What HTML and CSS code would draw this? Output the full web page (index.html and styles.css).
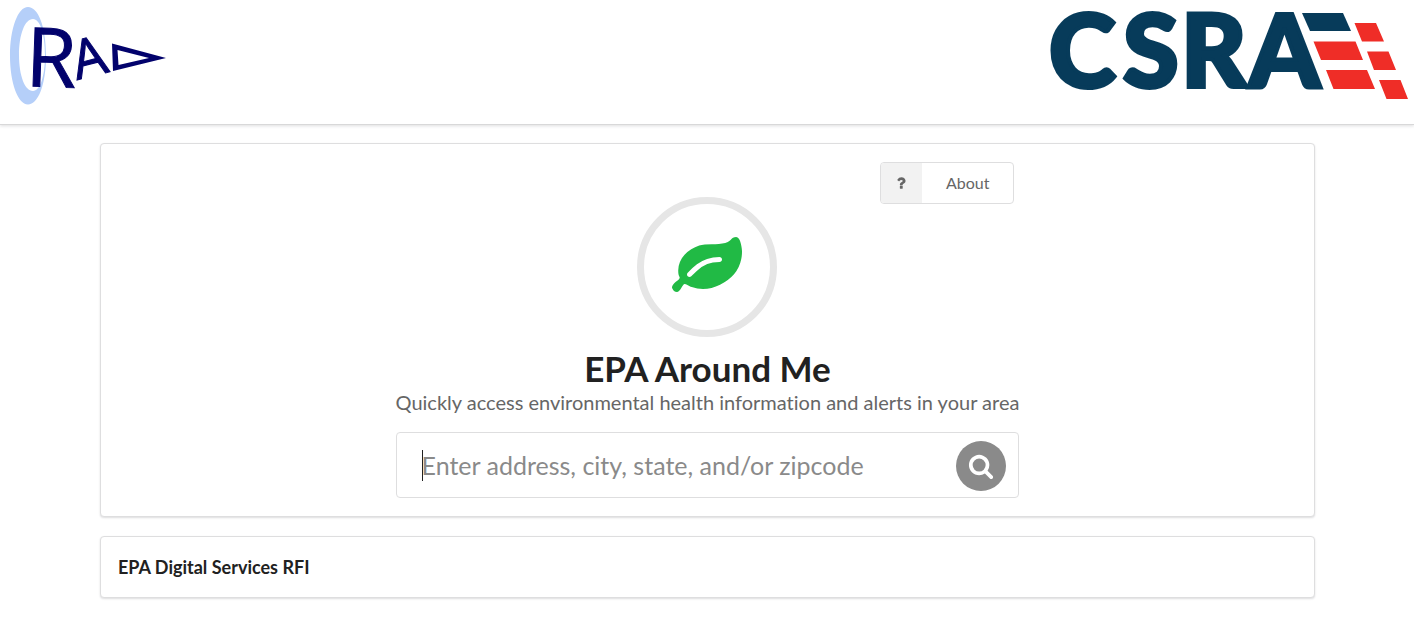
FILE: index.html
```html
<!DOCTYPE html>
<html lang="en">
<head>
<meta charset="utf-8">
<meta name="viewport" content="width=device-width, initial-scale=1">
<title>EPA Around Me</title>
<link rel="stylesheet" href="styles.css">
</head>
<body>
<header class="site-header">
  <svg class="logo-rad" viewBox="0 0 170 110" role="img" aria-label="RAD">
    <path class="rad-ring" fill-rule="evenodd" d="M28 7C38 7 46 26 46 56C46 85 38 104.500 28 104.500C18 104.500 10 83 10 56C10 28 18 7 28 7ZM33 19C25 19 19 34 19 55C19 76 25 91 33 91C40 91 45 76 45 55C45 34 40 19 33 19Z"/>
    <text class="rad-text" x="25" y="86" font-size="82" rotate="2">R</text>
    <text class="rad-text" x="77" y="80" font-size="54" rotate="-14">A</text>
    <path class="rad-arrow" fill-rule="evenodd" d="M112 43.500L166 58L113 71ZM117.500 50L118.500 65L149 58Z"/>
  </svg>
  <svg class="logo-csra" viewBox="0 0 374 110" role="img" aria-label="CSRA">
    <text class="csra-text" y="87" x="9 83 141 209">CSRA</text>
    <path class="csra-navy" d="M262 13h41l8 18h-41z"/>
    <path class="csra-red" d="M273.500 41.500h42l7.500 18.500h-42zM286 70h41l8 19h-41.500zM314.500 23H336l8 18.500h-22zM327 51.500h21.500L356 70h-22zM339 80h21.500l7.500 19h-21.500z"/>
  </svg>
</header>
<main class="page">
  <section class="card search-card">
    <div class="search-column">
      <button class="about" type="button">
        <span class="about-icon"><svg viewBox="0 0 1792 1792" aria-hidden="true"><path d="M1088 1256v240q0 16-12 28t-28 12h-240q-16 0-28-12t-12-28v-240q0-16 12-28t28-12h240q16 0 28 12t12 28zm316-600q0 54-15.500 101t-35 76.500-55 59.500-57.500 43.500-61 35.500q-41 23-68.500 65t-27.500 67q0 17-12 32.500t-28 15.500h-240q-15 0-25.500-18.500t-10.500-37.500v-45q0-83 65-156.500t143-108.500q59-27 84-56t25-76q0-42-46.500-74t-107.500-32q-65 0-108 29-35 25-107 115-13 16-31 16-12 0-25-8l-164-125q-13-10-15.500-25t5.500-28q160-266 464-266 80 0 161 31t146 83 106 127.500 41 158.500z"/></svg></span>
        <span class="about-label">About</span>
      </button>
      <div class="badge">
        <svg viewBox="0 128 1792 1792" aria-hidden="true"><path d="M1280 832q0-26-19-45t-45-19q-172 0-318 49.500t-259.500 134-235.500 219.500q-19 21-19 45 0 26 19 45t45 19q24 0 45-19 27-24 74-71t67-66q137-124 268.500-176t313.500-52q26 0 45-19t19-45zm512-198q0 95-20 193-46 224-184.500 383t-357.500 268q-214 108-438 108-148 0-286-47-15-5-88-42t-96-37q-16 0-39.500 32t-45 70-52.500 70-60 32q-43 0-63.500-17.500t-45.500-59.500q-2-4-6-11t-5.500-10-3-9.500-1.500-13.500q0-35 31-73.500t68-65.500 68-56 31-48q0-4-14-38t-16-44q-9-51-9-104 0-115 43.500-220t119-184.500 170.500-139 204-95.500q55-18 145-25.500t179.500-9 178.500-6 163.500-24 113.500-56.500l29.500-29.500 29.500-28 27-20 36.500-16 43.500-4.500q39 0 70.500 46t47.500 112 24 124 8 96z"/></svg>
      </div>
      <h1 class="title">EPA Around Me</h1>
      <p class="subtitle">Quickly access environmental health information and alerts in your area</p>
      <form class="search">
        <input class="search-input" type="text" aria-label="Location" placeholder="Enter address, city, state, and/or zipcode" autofocus>
        <button class="search-button" type="button" aria-label="Search"><svg viewBox="0 0 1792 1792" aria-hidden="true"><path d="M1216 832q0-185-131.500-316.500t-316.500-131.500-316.500 131.500-131.500 316.500 131.500 316.500 316.500 131.500 316.500-131.500 131.500-316.500zm512 832q0 52-38 90t-90 38q-54 0-90-38l-343-342q-179 124-399 124-143 0-273.500-55.500t-225-150-150-225-55.500-273.500 55.500-273.500 150-225 225-150 273.500-55.500 273.500 55.500 225 150 150 225 55.500 273.500q0 220-124 399l343 343q37 37 37 90z"/></svg></button>
      </form>
    </div>
  </section>
  <section class="card footer-card">
    <h2 class="footer-title">EPA Digital Services RFI</h2>
  </section>
</main>
</body>
</html>
```
FILE: styles.css
```css
* { box-sizing: border-box; }

body {
  margin: 0;
  background: #fff;
  color: #212121;
  font-family: Lato, "Liberation Sans", sans-serif;
  font-size: 16px;
  font-variant-ligatures: none;
}

.site-header {
  display: flex;
  justify-content: space-between;
  padding-bottom: 14px;
  border-bottom: 1px solid #d8d8d9;
  box-shadow: 0 1px 3px rgba(34, 36, 38, 0.15);
}

.logo-rad { width: 170px; height: 110px; }
.logo-csra { width: 374px; height: 110px; }
.rad-ring { fill: #b5cff9; }
.rad-text {
  fill: #02026c;
  stroke: #02026c;
  stroke-width: 1px;
  font-family: "Open Sans", sans-serif;
  font-weight: 500;
}
.rad-arrow { fill: #02026c; }
.csra-text {
  fill: #073b5a;
  stroke: #073b5a;
  stroke-width: 4px;
  font-family: Lato, sans-serif;
  font-weight: 900;
  font-size: 101px;
}
.csra-navy { fill: #073b5a; }
.csra-red { fill: #ef2d27; }

.page {
  display: flex;
  flex-direction: column;
  gap: 19px;
  padding: 18px 99px 32px 100px;
}

.card {
  border: 1px solid #dededf;
  border-radius: 4px;
  background: #fff;
  box-shadow: 0 1px 2px rgba(34, 36, 38, 0.15);
}

.search-card {
  display: flex;
  justify-content: center;
  padding: 18px;
}

.search-column {
  display: flex;
  flex-direction: column;
  align-items: center;
}

.about {
  display: flex;
  align-self: flex-end;
  height: 42px;
  margin-right: 5px;
  padding: 0;
  overflow: hidden;
  border: 1px solid #dededf;
  border-radius: 4px;
  background: #fff;
  color: #666;
  font: inherit;
}

.about-icon {
  display: flex;
  align-items: center;
  justify-content: center;
  width: 41px;
  height: 100%;
  background: #f2f2f2;
}

.about-icon svg { width: 16px; height: 16px; fill: #666; }
.about-label { padding: 0 24px; line-height: 40px; }

.badge {
  display: flex;
  align-items: center;
  justify-content: center;
  width: 140px;
  height: 140px;
  margin-top: -7px;
  border: 7px solid #e6e6e6;
  border-radius: 50%;
}

.badge svg { width: 70px; height: 70px; fill: #21ba45; }

.title {
  margin: 10px 0 0;
  font-size: 35px;
  line-height: 43px;
}

.subtitle {
  margin: 0 0 17px;
  color: #666;
  font-size: 20px;
  line-height: 25px;
}

.search {
  position: relative;
  display: flex;
  align-items: center;
  width: 100%;
  height: 66px;
  padding: 1px 12px 0 25px;
  border: 1px solid #dededf;
  border-radius: 4px;
}

/* Text cursor shown while the field is empty */
.search:has(:placeholder-shown)::before {
  content: "";
  position: absolute;
  left: 25px;
  top: 17px;
  width: 1px;
  height: 31px;
  background: #212121;
}

.search-input {
  flex: 1;
  min-width: 0;
  height: 60px;
  padding: 0 0 2px;
  border: 0;
  outline: 0;
  background: transparent;
  color: #212121;
  font: inherit;
  font-size: 25px;
}

.search-input:placeholder-shown { caret-color: transparent; }
.search-input::placeholder { color: #8a8a8a; opacity: 1; }

.search-button {
  display: flex;
  align-items: center;
  justify-content: center;
  width: 50px;
  height: 50px;
  padding: 0;
  border: 0;
  border-radius: 50%;
  background: #8a8a8a;
}

.search-button svg { width: 26px; height: 26px; fill: #fff; }

.footer-card { padding: 18px 17px; }
.footer-title { margin: 0; font-size: 18px; line-height: 24px; }
```
